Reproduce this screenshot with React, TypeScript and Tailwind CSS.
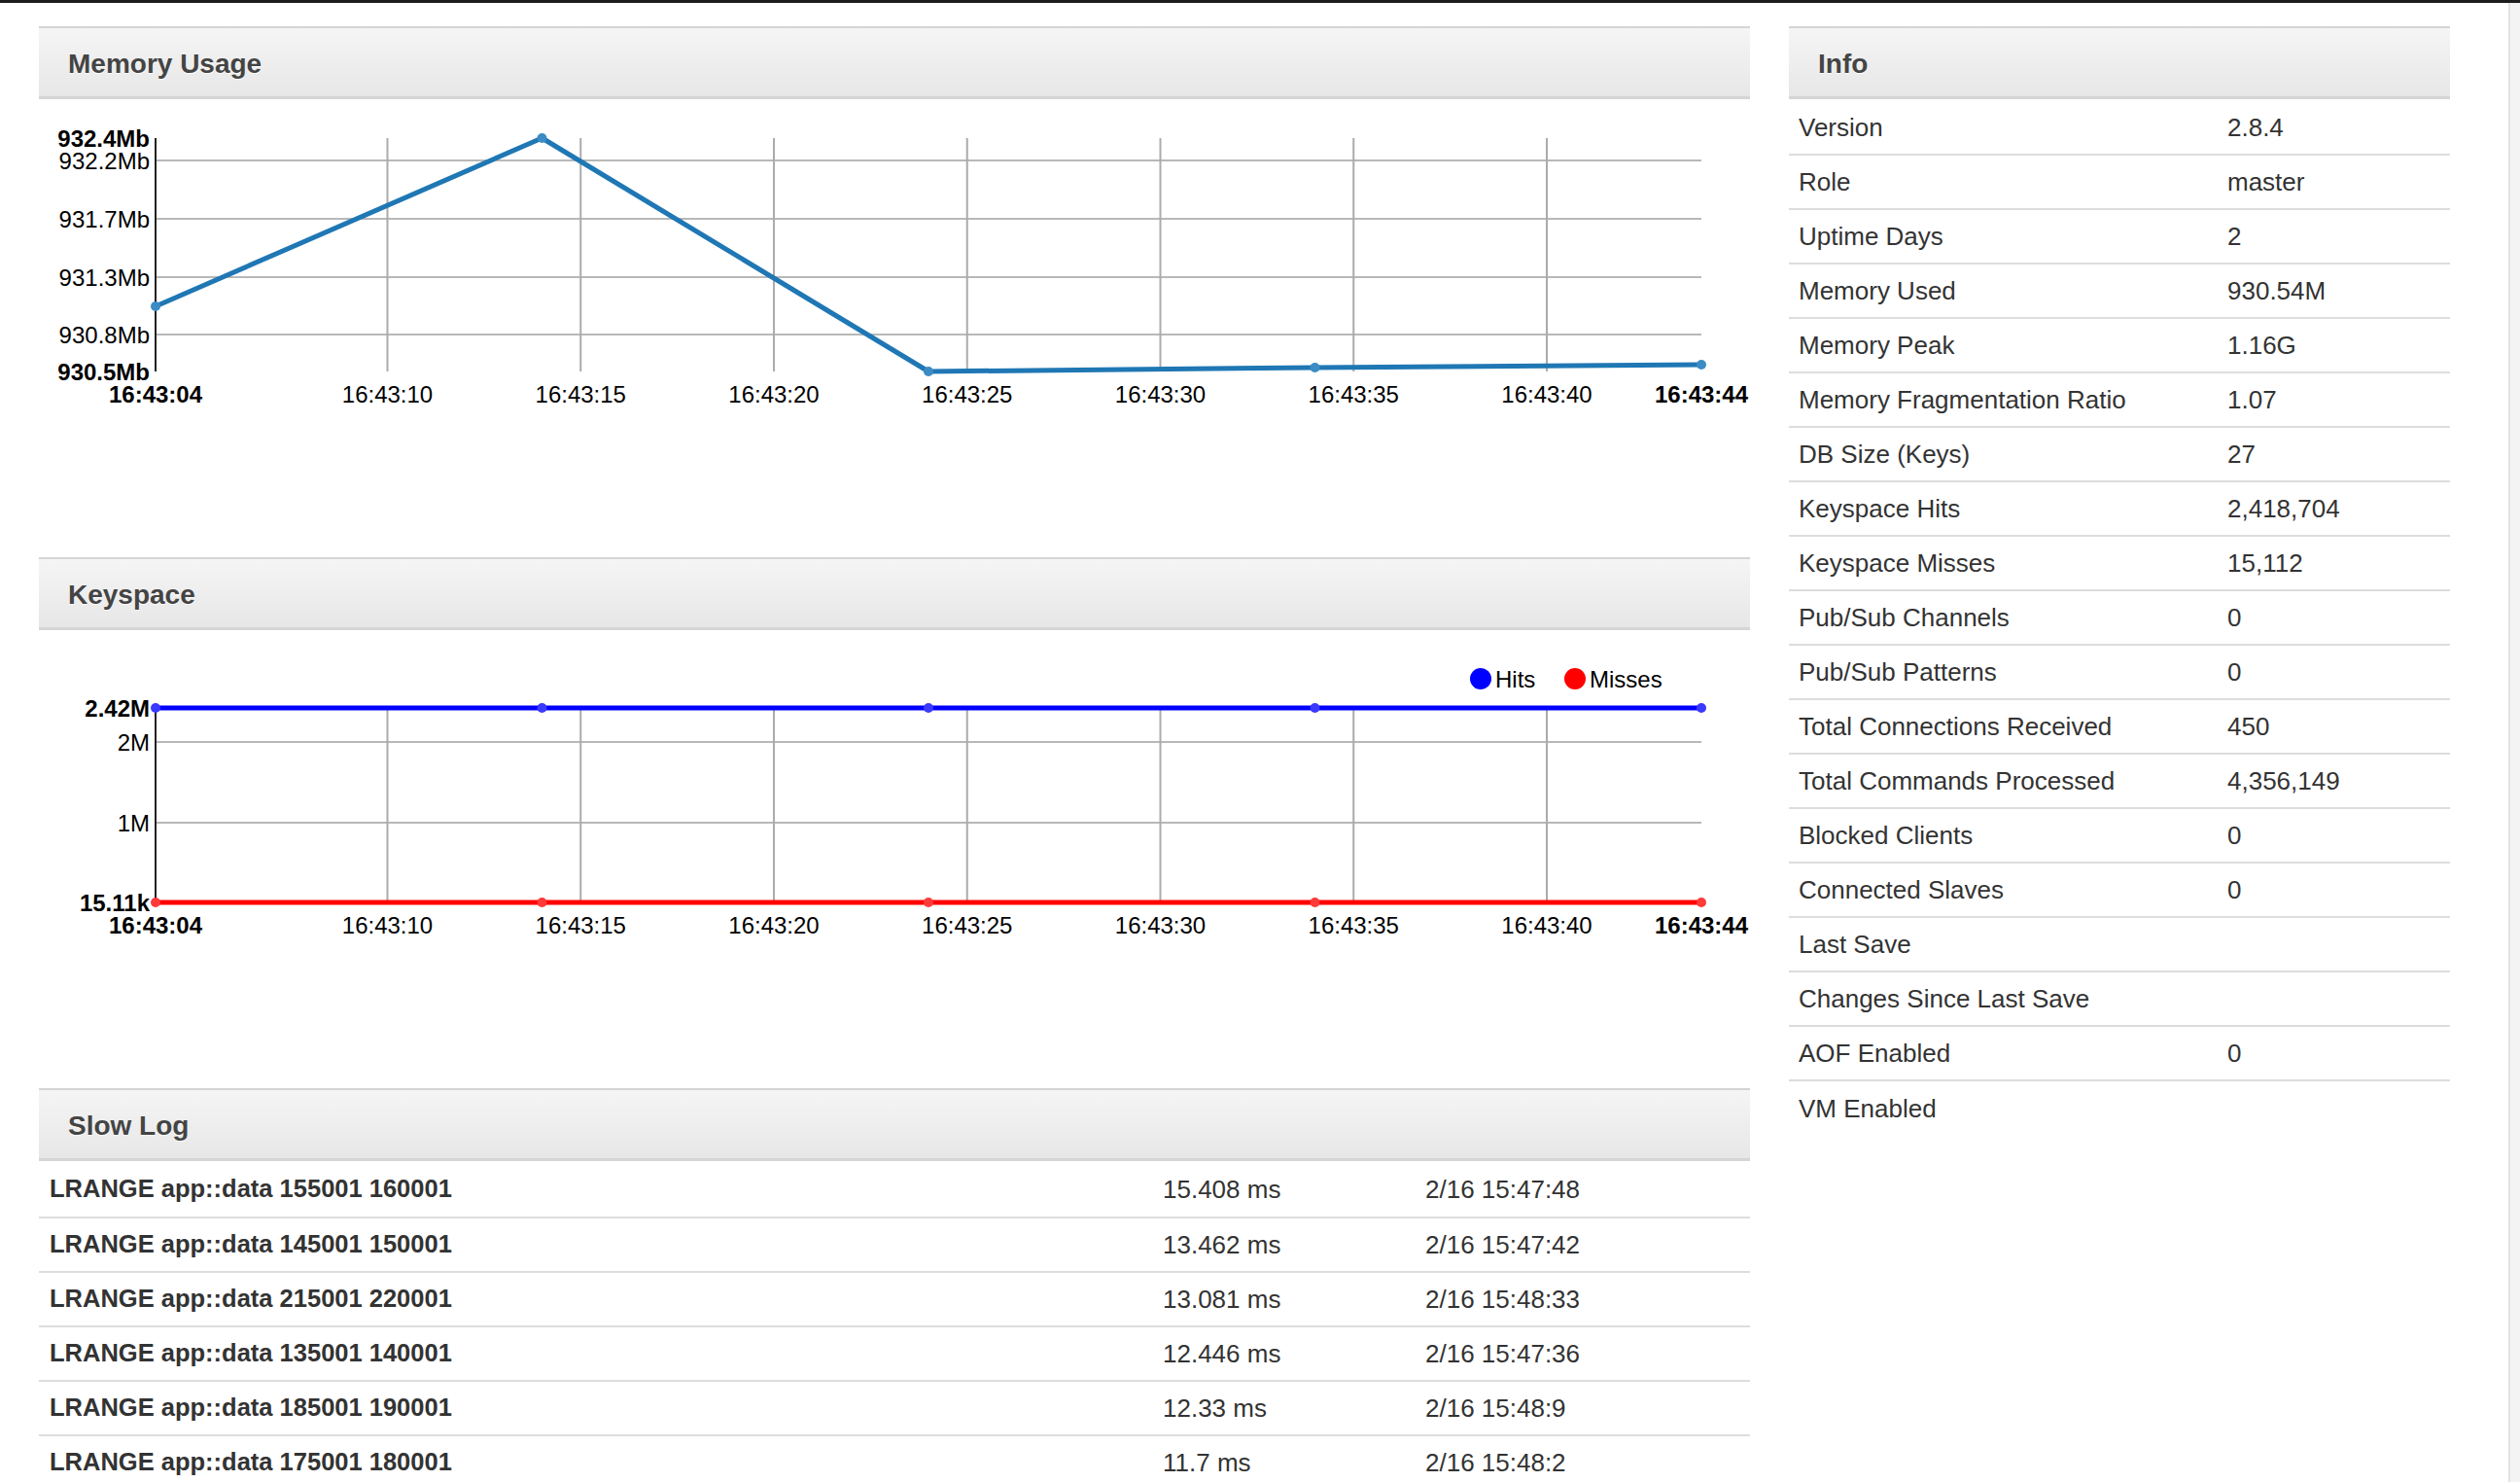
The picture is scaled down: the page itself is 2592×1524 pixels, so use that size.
import React from 'react';

// chart geometry (px, relative to the panel body)
const X0 = 120;
const X1 = 1710;
const PX_PER_SEC = (X1 - X0) / 40;
const xAt = (s: number) => X0 + s * PX_PER_SEC;
const PLOT_BOTTOM = 280;
const LABEL_Y = 303;

const xTicks = [
  { label: '16:43:04', s: 0, bold: true },
  { label: '16:43:10', s: 6 },
  { label: '16:43:15', s: 11 },
  { label: '16:43:20', s: 16 },
  { label: '16:43:25', s: 21 },
  { label: '16:43:30', s: 26 },
  { label: '16:43:35', s: 31 },
  { label: '16:43:40', s: 36 },
  { label: '16:43:44', s: 40, bold: true },
];

interface YTick {
  label: string;
  y: number;
  bold?: boolean;
  grid?: boolean;
}

interface Series {
  name: string;
  color: string;
  dot: string;
  points: [number, number][];
}

interface ChartProps {
  top: number;
  yTicks: YTick[];
  series: Series[];
  legend?: boolean;
}

const Chart: React.FC<ChartProps> = ({ top, yTicks, series, legend }) => (
  <svg
    width={1760}
    height={471}
    viewBox="0 0 1760 471"
    className="block font-['Liberation_Sans',Arial,sans-serif]"
  >
    {/* horizontal grid */}
    {yTicks.filter(t => t.grid).map(t => (
      <line key={t.label} x1={X0} x2={X1} y1={t.y} y2={t.y} stroke="#b8b8b8" strokeWidth={2} />
    ))}
    {/* vertical grid */}
    {xTicks.filter(t => !t.bold).map(t => (
      <line key={t.label} x1={xAt(t.s)} x2={xAt(t.s)} y1={top} y2={PLOT_BOTTOM} stroke="#ababab" strokeWidth={2} />
    ))}
    {/* y axis */}
    <line x1={X0} x2={X0} y1={top} y2={PLOT_BOTTOM} stroke="#222" strokeWidth={2} />
    {yTicks.map(t => (
      <text
        key={t.label}
        x={114}
        y={t.y}
        textAnchor="end"
        dominantBaseline="central"
        fontSize={24}
        fontWeight={t.bold ? 700 : 400}
        fill="#000"
      >
        {t.label}
      </text>
    ))}
    {xTicks.map(t => (
      <text
        key={t.label}
        x={xAt(t.s)}
        y={LABEL_Y}
        textAnchor="middle"
        dominantBaseline="central"
        fontSize={24}
        fontWeight={t.bold ? 700 : 400}
        fill="#000"
      >
        {t.label}
      </text>
    ))}
    {series.map(s => (
      <g key={s.name}>
        <polyline
          points={s.points.map(([x, y]) => `${x},${y}`).join(' ')}
          fill="none"
          stroke={s.color}
          strokeWidth={5}
          strokeLinejoin="round"
        />
        {s.points.map(([x, y]) => (
          <circle key={x} cx={x} cy={y} r={5} fill={s.dot} />
        ))}
      </g>
    ))}
    {legend && (
      <g fontSize={24} fill="#000">
        <circle cx={1483} cy={50} r={11} fill="#0000ff" />
        <text x={1498} y={50} dominantBaseline="central">Hits</text>
        <circle cx={1580} cy={50} r={11} fill="#ff0000" />
        <text x={1595} y={50} dominantBaseline="central">Misses</text>
      </g>
    )}
  </svg>
);

const PanelHeader: React.FC<{ title: string }> = ({ title }) => (
  <div className="h-[75px] flex items-center pl-[30px] pt-[4px] border-t-2 border-t-[#d4d4d4] border-b-[3px] border-b-[#d5d5d5] bg-linear-to-b from-[#f5f5f5] to-[#e7e7e7]">
    <h2 className="text-[28px] leading-none font-bold text-[#444] [text-shadow:0_1px_0_#fff]">{title}</h2>
  </div>
);

const dataX = [0, 10, 20, 30, 40].map(xAt);

const memorySeries: Series[] = [
  {
    name: 'memory',
    color: '#1f77b4',
    dot: '#3b8bc5',
    points: [
      [dataX[0], 213],
      [dataX[1], 40],
      [dataX[2], 280],
      [dataX[3], 276],
      [dataX[4], 273],
    ],
  },
];

const keyspaceSeries: Series[] = [
  { name: 'hits', color: '#0000ff', dot: '#3a3aff', points: dataX.map(x => [x, 80] as [number, number]) },
  { name: 'misses', color: '#ff0000', dot: '#ff3a3a', points: dataX.map(x => [x, 280] as [number, number]) },
];

const info: [string, string][] = [
  ['Version', '2.8.4'],
  ['Role', 'master'],
  ['Uptime Days', '2'],
  ['Memory Used', '930.54M'],
  ['Memory Peak', '1.16G'],
  ['Memory Fragmentation Ratio', '1.07'],
  ['DB Size (Keys)', '27'],
  ['Keyspace Hits', '2,418,704'],
  ['Keyspace Misses', '15,112'],
  ['Pub/Sub Channels', '0'],
  ['Pub/Sub Patterns', '0'],
  ['Total Connections Received', '450'],
  ['Total Commands Processed', '4,356,149'],
  ['Blocked Clients', '0'],
  ['Connected Slaves', '0'],
  ['Last Save', ''],
  ['Changes Since Last Save', ''],
  ['AOF Enabled', '0'],
  ['VM Enabled', ''],
];

const slowLog: [string, string, string][] = [
  ['LRANGE app::data 155001 160001', '15.408 ms', '2/16 15:47:48'],
  ['LRANGE app::data 145001 150001', '13.462 ms', '2/16 15:47:42'],
  ['LRANGE app::data 215001 220001', '13.081 ms', '2/16 15:48:33'],
  ['LRANGE app::data 135001 140001', '12.446 ms', '2/16 15:47:36'],
  ['LRANGE app::data 185001 190001', '12.33 ms', '2/16 15:48:9'],
  ['LRANGE app::data 175001 180001', '11.7 ms', '2/16 15:48:2'],
];

export default function App() {
  return (
    <div className="w-[2592px] h-[1524px] overflow-hidden bg-white flex flex-col font-['Liberation_Sans',Arial,sans-serif] text-[#333]">
      <div className="h-[3px] bg-[#1c1c1c] shrink-0" />
      <div className="flex flex-1 min-h-0">
        <div className="flex-1 flex gap-[40px] pl-[40px] pt-[24px]">
          {/* left column */}
          <div className="w-[1760px] flex flex-col">
            <section>
              <PanelHeader title="Memory Usage" />
              <Chart
                top={40}
                series={memorySeries}
                yTicks={[
                  { label: '932.4Mb', y: 40, bold: true },
                  { label: '932.2Mb', y: 63, grid: true },
                  { label: '931.7Mb', y: 123, grid: true },
                  { label: '931.3Mb', y: 183, grid: true },
                  { label: '930.8Mb', y: 242, grid: true },
                  { label: '930.5Mb', y: 280, bold: true },
                ]}
              />
            </section>
            <section>
              <PanelHeader title="Keyspace" />
              <Chart
                top={80}
                legend
                series={keyspaceSeries}
                yTicks={[
                  { label: '2.42M', y: 80, bold: true },
                  { label: '2M', y: 115, grid: true },
                  { label: '1M', y: 198, grid: true },
                  { label: '15.11k', y: 280, bold: true },
                ]}
              />
            </section>
            <section>
              <PanelHeader title="Slow Log" />
              {slowLog.map(([cmd, time, date], i) => (
                <div
                  key={cmd}
                  className={`grid grid-cols-[1145px_270px_1fr] items-center px-[11px] text-[26px] leading-none ${
                    i > 0 ? 'h-[56px] border-t-2 border-[#dddddd]' : 'h-[57px]'
                  }`}
                >
                  <span className="font-bold text-[25.5px]">{cmd}</span>
                  <span>{time}</span>
                  <span>{date}</span>
                </div>
              ))}
            </section>
          </div>

          {/* right column */}
          <section className="w-[680px]">
            <PanelHeader title="Info" />
            <div className="pt-[2px]">
              {info.map(([label, value], i) => (
                <div
                  key={label}
                  className={`grid grid-cols-[441px_1fr] items-center h-[56px] px-[10px] text-[26px] leading-none ${
                    i < info.length - 1 ? 'border-b-2 border-[#dddddd]' : ''
                  }`}
                >
                  <span>{label}</span>
                  <span>{value}</span>
                </div>
              ))}
            </div>
          </section>
        </div>
        <div className="w-[12px] shrink-0 bg-[#f3f3f3] border-l-2 border-[#e2e2e2]" />
      </div>
    </div>
  );
}
